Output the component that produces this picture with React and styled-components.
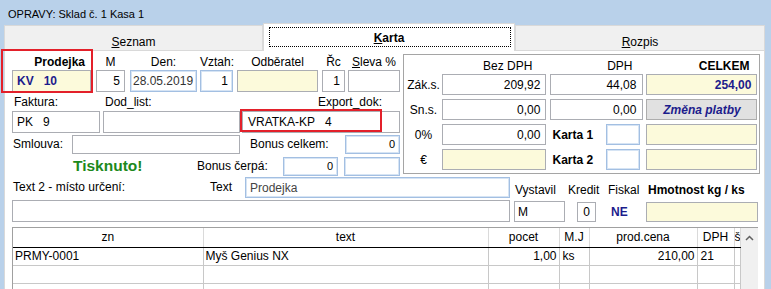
import React from 'react';
import styled, { createGlobalStyle, css } from 'styled-components';

const NAVY = '#1c1c8c';

const GlobalStyle = createGlobalStyle`
  html, body { margin: 0; padding: 0; }
  body {
    background: #b9d1ea;
    font-family: 'Liberation Sans', Arial, sans-serif;
    font-size: 12px;
    color: #000;
  }
  * { box-sizing: border-box; }
`;

const Window = styled.div`
  width: 771px;
  height: 289px;
  overflow: hidden;
  background: #b9d1ea;
  padding: 0 6px 0 4px;
  display: flex;
  flex-direction: column;
`;

const TitleBar = styled.div`
  height: 25px;
  flex-shrink: 0;
  padding: 7px 0 0 4px;
  font-size: 11px;
  line-height: 14px;
`;

const TabStrip = styled.div`
  display: flex;
  align-items: flex-end;
  height: 26px;
  flex-shrink: 0;
`;

const Tab = styled.div`
  position: relative;
  width: ${(p) => p.$w}px;
  height: ${(p) => (p.$active ? 28 : 26)}px;
  background: ${(p) => (p.$active ? '#fff' : '#f0f0f0')};
  border: 1px solid #d9d9d9;
  border-bottom: ${(p) => (p.$active ? 'none' : '1px solid #d9d9d9')};
  text-align: center;
  padding-top: ${(p) => (p.$active ? 7 : 9)}px;
  line-height: 14px;
  font-weight: ${(p) => (p.$active ? 700 : 400)};

  ${(p) =>
    p.$active &&
    css`
      &::after {
        content: '';
        position: absolute;
        left: 5px;
        right: 3px;
        top: 3px;
        bottom: 4px;
        border: 1px dotted #000;
      }
    `}
`;

const Body = styled.div`
  flex: 1;
  background: #fff;
  border-left: 1px solid #d9d9d9;
  border-right: 1px solid #d9d9d9;
  padding: 0 4px 0 7px;
`;

const Top = styled.div`
  display: flex;
`;

const LeftPane = styled.div`
  width: 392px;
  display: flex;
  flex-direction: column;
`;

const Row = styled.div`
  display: flex;
  align-items: ${(p) => p.$align || 'flex-start'};
  height: ${(p) => p.$h}px;
  margin-top: ${(p) => p.$mt || 0}px;
`;

const Field = styled.div`
  position: relative;
  display: flex;
  flex-direction: column;
  width: ${(p) => p.$w}px;
  margin-left: ${(p) => p.$ml || 0}px;
  flex-shrink: 0;
`;

const Caption = styled.div`
  height: ${(p) => p.$h || 19}px;
  width: ${(p) => (p.$w ? `${p.$w}px` : 'auto')};
  margin-left: ${(p) => p.$ml || 0}px;
  flex-shrink: 0;
  padding-top: ${(p) => p.$pt ?? 4}px;
  padding-left: ${(p) => p.$pl || 0}px;
  padding-right: ${(p) => p.$pr || 0}px;
  line-height: 14px;
  white-space: nowrap;
  text-align: ${(p) => p.$align || 'center'};
  font-weight: ${(p) => (p.$bold ? 700 : 400)};

  u {
    text-decoration: underline;
  }
`;

const toneBorder = {
  plain: '#abadb3',
  blue: '#a3bfe2',
  yellow: '#abadb3',
};

const Box = styled.div`
  width: ${(p) => (p.$w ? `${p.$w}px` : '100%')};
  height: ${(p) => p.$h || 22}px;
  margin-left: ${(p) => p.$ml || 0}px;
  margin-top: ${(p) => p.$mt || 0}px;
  flex-shrink: 0;
  border: 1px solid ${(p) => toneBorder[p.$tone || 'plain']};
  box-shadow: ${(p) => (p.$tone === 'blue' ? 'inset 0 0 0 1px #d6e4f4' : 'none')};
  background: ${(p) => (p.$tone === 'yellow' ? '#fcfadb' : '#fff')};
  display: flex;
  align-items: center;
  justify-content: ${(p) =>
    p.$justify === 'right' ? 'flex-end' : p.$justify === 'center' ? 'center' : 'flex-start'};
  padding: 0 ${(p) => p.$pr ?? 4}px 0 ${(p) => p.$pl ?? 4}px;
  white-space: pre;
  font-size: ${(p) => p.$size || 12}px;
  font-weight: ${(p) => (p.$bold ? 700 : 400)};
  color: ${(p) => p.$color || '#000'};
`;

const Highlight = styled.div`
  position: absolute;
  left: ${(p) => p.$l}px;
  top: ${(p) => p.$t}px;
  right: ${(p) => p.$r}px;
  bottom: ${(p) => p.$b}px;
  border: 2px solid #e3202a;
  pointer-events: none;
  z-index: 2;
`;

const Printed = styled.div`
  margin-left: ${(p) => p.$ml}px;
  width: ${(p) => p.$w}px;
  flex-shrink: 0;
  font-size: 15.5px;
  font-weight: 700;
  color: #1c891c;
  white-space: nowrap;
`;

const GroupBox = styled.div`
  width: 357px;
  height: 120px;
  margin-top: 3px;
  border: 1px solid #a5a5a5;
  display: flex;
  flex-direction: column;
`;

const TotRows = styled.div`
  display: flex;
  flex-direction: column;
  gap: 4px;
`;

const TotRow = styled.div`
  display: flex;
  align-items: center;
  height: ${(p) => p.$h || 21}px;
`;

const RowLabel = styled.div`
  width: 38px;
  flex-shrink: 0;
  text-align: center;
  white-space: nowrap;
`;

const CardCell = styled.div`
  width: 93px;
  margin-left: 4px;
  flex-shrink: 0;
  display: flex;
  align-items: center;
  padding: 0 3px 0 2px;
  font-weight: 700;
  white-space: nowrap;

  & > div {
    margin-left: auto;
  }
`;

const PayButton = styled.div`
  width: 111px;
  height: 21px;
  margin-left: 3px;
  flex-shrink: 0;
  background: #e1e1e1;
  border: 1px solid #adadad;
  display: flex;
  align-items: center;
  justify-content: center;
  font-weight: 700;
  font-style: italic;
  color: ${NAVY};
`;

const Mid = styled.div`
  display: flex;
  height: 45px;
`;

const MidCol = styled.div`
  width: ${(p) => p.$w}px;
  margin-left: ${(p) => p.$ml || 0}px;
  display: flex;
  flex-direction: column;
`;

const Flag = styled.div`
  width: ${(p) => p.$w}px;
  margin-left: ${(p) => p.$ml}px;
  flex-shrink: 0;
  font-weight: 700;
  color: ${NAVY};
  align-self: center;
`;

const TableWrap = styled.div`
  margin-top: 5px;
  width: 746px;
  height: 80px;
  border-top: 1px solid #a0a0a0;
  border-left: 1px solid #a0a0a0;
  display: flex;
`;

const Grid = styled.table`
  width: 727px;
  table-layout: fixed;
  border-collapse: collapse;
  align-self: flex-start;

  th {
    height: 19px;
    padding: 0;
    font-weight: 400;
    text-align: center;
    border-right: 1px solid #dadada;
    border-bottom: 1px solid #000;
    white-space: nowrap;
    overflow: hidden;
  }

  td {
    height: 18px;
    padding: 0 2px;
    border-right: 1px solid #c8c8c8;
    border-bottom: 1px solid #c8c8c8;
    white-space: nowrap;
    overflow: hidden;
  }
`;

const Cell = styled.td`
  text-align: ${(p) => (p.$right ? 'right' : 'left')};
  && {
    padding-left: ${(p) => p.$pl ?? 2}px;
  }
`;

const ScrollBar = styled.div`
  width: 18px;
  background: #f0f0f0;
  display: flex;
  flex-direction: column;
  align-items: center;
  padding-top: 7px;
`;

const columns = [190, 285, 71, 30, 108, 37, 6];
const heads = ['zn', 'text', 'pocet', 'M.J', 'prod.cena', 'DPH', 'š'];
const items = [
  { zn: 'PRMY-0001', text: 'Myš Genius NX', pocet: '1,00', mj: 'ks', cena: '210,00', dph: '21' },
  {},
  {},
];

export default function App() {
  return (
    <>
      <GlobalStyle />
      <Window>
        <TitleBar>OPRAVY: Sklad č. 1 Kasa 1</TitleBar>
        <TabStrip>
          <Tab $w={259}>
            <u>S</u>eznam
          </Tab>
          <Tab $w={252} $active>
            <u>K</u>arta
          </Tab>
          <Tab $w={250}>
            <u>R</u>ozpis
          </Tab>
        </TabStrip>

        <Body>
          <Top>
            <LeftPane>
              <Row $h={41}>
                <Field $w={79}>
                  <Caption $align="right" $pr={6} $bold>
                    Prodejka
                  </Caption>
                  <Box $tone="yellow" $bold $color={NAVY}>
                    {'KV   10'}
                  </Box>
                  <Highlight $l={-11} $t={-2} $r={-2} $b={-1} />
                </Field>
                <Field $w={29} $ml={5}>
                  <Caption>M</Caption>
                  <Box $justify="right">5</Box>
                </Field>
                <Field $w={67} $ml={5}>
                  <Caption>Den:</Caption>
                  <Box $tone="blue" $pl={2} $color="#333">
                    28.05.2019
                  </Box>
                </Field>
                <Field $w={33} $ml={3}>
                  <Caption>Vztah:</Caption>
                  <Box $tone="blue" $justify="right">
                    1
                  </Box>
                </Field>
                <Field $w={81} $ml={4}>
                  <Caption>Odběratel</Caption>
                  <Box $tone="yellow" />
                </Field>
                <Field $w={23} $ml={4}>
                  <Caption>Řc</Caption>
                  <Box $justify="right">1</Box>
                </Field>
                <Field $w={52} $ml={3}>
                  <Caption>
                    <u>S</u>leva %
                  </Caption>
                  <Box />
                </Field>
              </Row>

              <Row $h={41}>
                <Field $w={88}>
                  <Caption $align="left" $pl={2} $pt={3}>
                    Faktura:
                  </Caption>
                  <Box>{'PK   9'}</Box>
                </Field>
                <Field $w={137} $ml={3}>
                  <Caption $align="left" $pl={2} $pt={3}>
                    Dod_list:
                  </Caption>
                  <Box />
                </Field>
                <Field $w={158} $ml={2}>
                  <Caption $align="right" $pr={18} $pt={3}>
                    Export_dok:
                  </Caption>
                  <Box $pl={5}>{'VRATKA-KP   4'}</Box>
                  <Highlight $l={-2} $t={17} $r={18} $b={1} />
                </Field>
              </Row>

              <Row $h={22} $align="center">
                <Caption $w={60} $pl={1} $pt={0} $h={14} $align="left">
                  Smlouva:
                </Caption>
                <Box $w={168} $h={19} />
                <Caption $w={95} $ml={10} $pt={0} $h={14} $align="left">
                  Bonus celkem:
                </Caption>
                <Box $w={55} $h={19} $tone="blue" $justify="right" $size={11}>
                  0
                </Box>
              </Row>

              <Row $h={22} $align="center">
                <Printed $ml={61} $w={124}>
                  Tisknuto!
                </Printed>
                <Caption $w={86} $pt={0} $h={14} $align="left">
                  Bonus čerpá:
                </Caption>
                <Box $w={55} $h={19} $tone="blue" $justify="right" $size={11}>
                  0
                </Box>
                <Box $w={56} $h={19} $ml={6} $tone="blue" />
              </Row>
            </LeftPane>

            <GroupBox>
              <TotRow $h={19}>
                <RowLabel />
                <Caption $w={104} $align="right" $pr={14}>
                  Bez DPH
                </Caption>
                <Caption $w={93} $ml={4} $align="right" $pr={11}>
                  DPH
                </Caption>
                <Caption $w={111} $ml={3} $align="right" $pr={8} $bold>
                  CELKEM
                </Caption>
              </TotRow>
              <TotRows>
                <TotRow>
                  <RowLabel>Zák.s.</RowLabel>
                  <Box $w={104} $h={21} $justify="right" $pr={5}>
                    209,92
                  </Box>
                  <Box $w={93} $h={21} $ml={4} $justify="right" $pr={6}>
                    44,08
                  </Box>
                  <Box $w={111} $h={21} $ml={3} $tone="yellow" $justify="right" $pr={5} $bold $color={NAVY}>
                    254,00
                  </Box>
                </TotRow>
                <TotRow>
                  <RowLabel>Sn.s.</RowLabel>
                  <Box $w={104} $h={21} $justify="right" $pr={5}>
                    0,00
                  </Box>
                  <Box $w={93} $h={21} $ml={4} $justify="right" $pr={6}>
                    0,00
                  </Box>
                  <PayButton>Změna platby</PayButton>
                </TotRow>
                <TotRow>
                  <RowLabel>0%</RowLabel>
                  <Box $w={104} $h={21} $justify="right" $pr={5}>
                    0,00
                  </Box>
                  <CardCell>
                    Karta 1
                    <Box $w={34} $h={21} $tone="blue" />
                  </CardCell>
                  <Box $w={111} $h={21} $ml={3} $tone="yellow" />
                </TotRow>
                <TotRow>
                  <RowLabel>€</RowLabel>
                  <Box $w={104} $h={21} $tone="yellow" />
                  <CardCell>
                    Karta 2
                    <Box $w={34} $h={21} $tone="blue" />
                  </CardCell>
                  <Box $w={111} $h={21} $ml={3} $tone="yellow" />
                </TotRow>
              </TotRows>
            </GroupBox>
          </Top>

          <Mid>
            <MidCol $w={498}>
              <Row $h={22}>
                <Caption $w={198} $pl={1} $pt={3} $align="left">
                  Text 2 - místo určení:
                </Caption>
                <Caption $w={35} $pt={3} $align="left">
                  Text
                </Caption>
                <Box $w={265} $h={21} $tone="blue" $color="#444">
                  Prodejka
                </Box>
              </Row>
              <Box $h={22} $mt={1} />
            </MidCol>
            <MidCol $w={244} $ml={4}>
              <Row $h={24}>
                <Caption $w={53} $pl={1} $pt={6} $align="left">
                  Vystavil
                </Caption>
                <Caption $w={40} $pl={1} $pt={6} $align="left">
                  Kredit
                </Caption>
                <Caption $w={41} $pl={1} $pt={6} $align="left">
                  Fiskal
                </Caption>
                <Caption $pt={6} $align="left" $bold>
                  Hmotnost kg / ks
                </Caption>
              </Row>
              <Row $h={21}>
                <Box $w={51} $h={21} $pl={3}>
                  M
                </Box>
                <Box $w={19} $h={20} $ml={12} $mt={1} $justify="center" $pl={0} $pr={0}>
                  0
                </Box>
                <Flag $w={17} $ml={15}>
                  NE
                </Flag>
                <Box $w={112} $h={20} $ml={18} $mt={1} $tone="yellow" />
              </Row>
            </MidCol>
          </Mid>

          <TableWrap>
            <Grid>
              <colgroup>
                {columns.map((w, i) => (
                  <col key={i} style={{ width: w }} />
                ))}
              </colgroup>
              <thead>
                <tr>
                  {heads.map((h) => (
                    <th key={h}>{h}</th>
                  ))}
                </tr>
              </thead>
              <tbody>
                {items.map((it, i) => (
                  <tr key={i}>
                    <Cell>{it.zn}</Cell>
                    <Cell>{it.text}</Cell>
                    <Cell $right>{it.pocet}</Cell>
                    <Cell $pl={3}>{it.mj}</Cell>
                    <Cell $right>{it.cena}</Cell>
                    <Cell $pl={3}>{it.dph}</Cell>
                    <Cell />
                  </tr>
                ))}
              </tbody>
            </Grid>
            <ScrollBar>
              <svg width="9" height="6" viewBox="0 0 9 6">
                <polyline points="1,5 4.5,1.5 8,5" fill="none" stroke="#606060" strokeWidth="1.5" />
              </svg>
            </ScrollBar>
          </TableWrap>
        </Body>
      </Window>
    </>
  );
}
